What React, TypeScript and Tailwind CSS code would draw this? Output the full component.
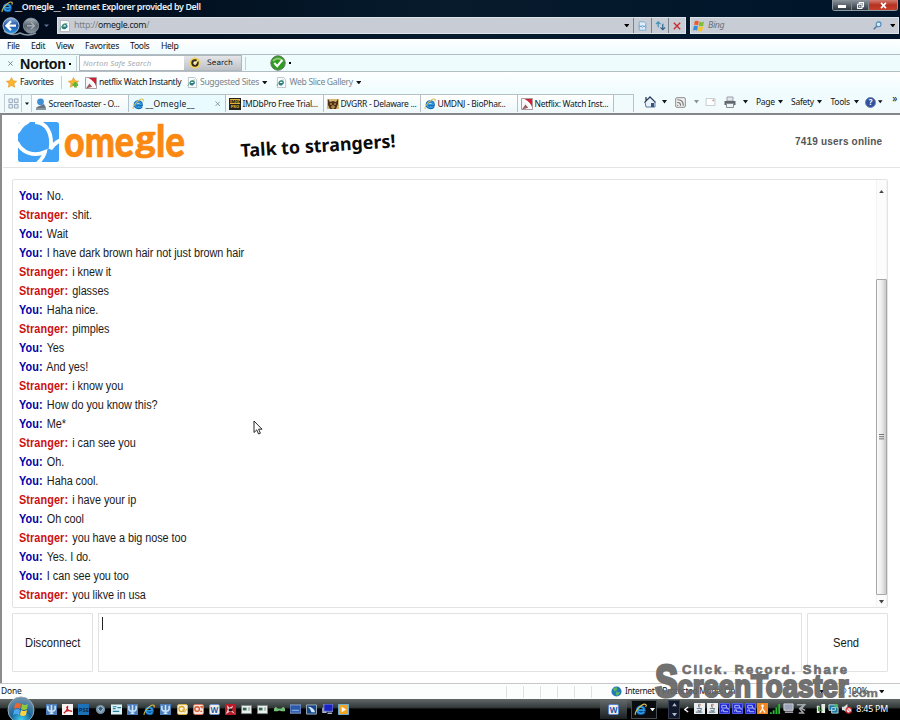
import type { ReactNode } from 'react';
import clsx from 'clsx';

interface IconProps {
  className?: string;
}

const messages: { from: 'You' | 'Stranger'; text: string }[] = [
  { from: 'You', text: 'No.' },
  { from: 'Stranger', text: 'shit.' },
  { from: 'You', text: 'Wait' },
  { from: 'You', text: 'I have dark brown hair not just brown hair' },
  { from: 'Stranger', text: 'i knew it' },
  { from: 'Stranger', text: 'glasses' },
  { from: 'You', text: 'Haha nice.' },
  { from: 'Stranger', text: 'pimples' },
  { from: 'You', text: 'Yes' },
  { from: 'You', text: 'And yes!' },
  { from: 'Stranger', text: 'i know you' },
  { from: 'You', text: 'How do you know this?' },
  { from: 'You', text: 'Me*' },
  { from: 'Stranger', text: 'i can see you' },
  { from: 'You', text: 'Oh.' },
  { from: 'You', text: 'Haha cool.' },
  { from: 'Stranger', text: 'i have your ip' },
  { from: 'You', text: 'Oh cool' },
  { from: 'Stranger', text: 'you have a big nose too' },
  { from: 'You', text: 'Yes. I do.' },
  { from: 'You', text: 'I can see you too' },
  { from: 'Stranger', text: 'you likve in usa' },
];

function IeIcon({ className }: IconProps) {
  return (
    <svg viewBox="0 0 12 12" className={clsx('shrink-0', className)}>
      <path d="M9.6 8.3C8.4 10.6 2.9 10.7 2.9 6.6 2.9 2.4 9.7 2.1 9.6 6.9H3.4" fill="none" stroke="#0f5fae" strokeWidth="2.5" />
      <path d="M9.3 8.3C8.2 10 3.1 10.2 3.1 6.5 3.1 2.8 9.3 2.6 9.3 6.6H3.6" fill="none" stroke="#2f9ce2" strokeWidth="1.4" />
      <path d="M1.4 10.9C-.3 8.9 7.6-.3 10.8 1.3c.7.5.4 1.6 0 2.3" fill="none" stroke="#d9bf4e" strokeWidth="1.1" />
    </svg>
  );
}

function IePage({ className }: IconProps) {
  return (
    <svg viewBox="0 0 12 12" className={clsx('shrink-0', className)}>
      <path d="M1.5.5h6.8l2.2 2.2v8.8h-9z" fill="#fbfdff" stroke="#a6b1b8" strokeWidth="0.8" />
      <path d="M8 7.2H3.5C3.6 8.8 6 8.9 6.8 7.9M3.5 6.9C3.3 3.6 8.1 3.2 8 7.2" fill="none" stroke="#2c7d86" strokeWidth="1.5" />
      <path d="M1.2 9.8C.6 8 5.7 3 8.4 3.3" fill="none" stroke="#61a36d" strokeWidth="0.9" />
    </svg>
  );
}

function Flag({ className }: IconProps) {
  return (
    <svg viewBox="0 0 12 12" className={clsx('shrink-0', className)}>
      <path d="M1.8 1.2C3.3.5 4.6.6 5.8 1.3L5 5.4C3.7 4.7 2.4 4.7 1 5.3Z" fill="#ee5b29" />
      <path d="M6.5 1.6c1.5.7 2.9.7 4.5 0l-.8 4.1c-1.5.7-3 .7-4.5 0z" fill="#83bd35" />
      <path d="M.9 6.1c1.3-.6 2.7-.6 4 .1l-.8 4.2c-1.3-.7-2.6-.7-4 0z" fill="#348cdc" />
      <path d="M5.6 6.5c1.5.7 2.9.7 4.5 0l-.8 4.2c-1.6.7-3 .7-4.5-.1z" fill="#fcc42b" />
    </svg>
  );
}

function NetflixIcon({ className }: IconProps) {
  return (
    <svg viewBox="0 0 12 12" className={clsx('shrink-0', className)}>
      <path d="M.5.5h11v11H.5z" fill="#fff" stroke="#9a8387" strokeWidth="0.8" />
      <path d="M3.5 1H11v8.2Q9.6 4.2 3.5 1z" fill="#cf2138" />
      <path d="M1 2q6.5 3 8 9H1z" fill="#f6f6f6" />
      <path d="M1 11.5l3.4-5 2.8 3.3z" fill="#9c5960" />
    </svg>
  );
}

function Star({ plus }: { plus?: boolean }) {
  return (
    <svg viewBox="0 0 12 12" className="size-[11px] shrink-0">
      <path d="M6 .5l1.7 3.6 3.9.5-2.9 2.7.8 3.9L6 9.3l-3.5 1.9.8-3.9L.4 4.6l3.9-.5z" fill="#fbb62d" stroke="#e18e1e" strokeWidth="0.6" />
      {plus && <path d="M8 5.5v6M5 8.5h6" stroke="#5eb63b" strokeWidth="2.6" />}
    </svg>
  );
}

function Caret({ className }: IconProps) {
  return (
    <svg viewBox="0 0 6 4" className={clsx('h-[3.5px] shrink-0', className ?? 'w-[5.5px]')}>
      <path d="M0 0h6L3 4z" fill="currentColor" />
    </svg>
  );
}

function TitleBar() {
  return (
    <div className="flex h-[14px] items-start justify-between">
      <div className="flex h-[14px] items-center pl-[1px]">
        <IeIcon className="size-[12px]" />
        <span className="ml-[2px] text-[8.9px] font-semibold tracking-[-0.37px] text-[#e8f0f4]">__Omegle__ - Internet Explorer provided by Dell</span>
      </div>
      <div className="mr-[2px] flex h-[11px] w-[66px] overflow-hidden rounded-b-[3px] border border-t-0 border-[#8f9aa3]">
        <div className="flex w-[19px] items-center justify-center border-r border-[#7f8991] bg-linear-to-b from-[#8d949c] to-[#2e3841]">
          <span className="mt-[3px] h-[3px] w-[8px] bg-white" />
        </div>
        <div className="flex w-[17px] items-center justify-center border-r border-[#7f8991] bg-linear-to-b from-[#8d949c] to-[#2e3841]">
          <svg viewBox="0 0 8 8" className="size-[7px]">
            <path d="M2.5 2V.7h5v4.6H6M.7 2.5h5v4.8h-5zM2.5 5h1.4" fill="none" stroke="#fff" strokeWidth="1.2" />
          </svg>
        </div>
        <div className="flex flex-1 items-center justify-center bg-linear-to-b from-[#d17a6d] via-[#b6301f] to-[#c5422e]">
          <svg viewBox="0 0 8 8" className="size-[7px]">
            <path d="M1.2 1l5.6 6M6.8 1L1.2 7" stroke="#fff" strokeWidth="1.8" />
          </svg>
        </div>
      </div>
    </div>
  );
}

function NavButtons() {
  return (
    <svg viewBox="0 0 54 20" className="h-[20px] w-[54px] shrink-0">
      <defs>
        <linearGradient id="back" x1="0" y1="0" x2="0" y2="1">
          <stop offset="0" stopColor="#8bb4e2" />
          <stop offset="0.5" stopColor="#1e519f" />
          <stop offset="1" stopColor="#2f9de9" />
        </linearGradient>
        <linearGradient id="fwd" x1="0" y1="0" x2="0" y2="1">
          <stop offset="0" stopColor="#b1bac3" />
          <stop offset="0.5" stopColor="#58636e" />
          <stop offset="1" stopColor="#8e99a3" />
        </linearGradient>
      </defs>
      <path d="M3 15q8 6 16 2 8 4 16 0" fill="none" stroke="#8494a2" strokeWidth="1.5" />
      <circle cx="10" cy="9.7" r="8" fill="url(#back)" stroke="#a9bfd4" />
      <circle cx="30" cy="9.7" r="7.6" fill="url(#fwd)" stroke="#7b8791" />
      <path d="M10 5.3L5.5 9.7l4.5 4.4M6 9.7h9" fill="none" stroke="#fff" strokeWidth="2.3" />
      <path d="M30 6.3l3.5 3.4-3.5 3.4M33 9.7h-7" fill="none" stroke="#a3adb6" strokeWidth="1.4" />
      <path d="M43 8.5h5L45.5 11z" fill="#5d7890" />
    </svg>
  );
}

function AddressBar() {
  return (
    <div className="flex h-[25px] items-start pl-[1px]">
      <div className="pt-[2px]">
        <NavButtons />
      </div>
      <div className="mt-[3px] ml-[2px] flex h-[17px] w-[629px] border border-[#dce4ea] bg-[#c8cdd5]">
        <div className="flex w-[575px] items-center pl-[1px]">
          <IePage className="size-[12px]" />
          <span className="ml-[3px] text-[8.8px] tracking-[-0.3px] text-[#757f87]">
            http://<span className="text-[#101820]">omegle.com</span>/
          </span>
          <Caret className="mr-[4px] ml-auto w-[5.5px] text-black" />
        </div>
        <div className="flex w-[18px] items-center justify-center border-l border-[#79838c]">
          <svg viewBox="0 0 10 12" className="h-[10px] w-[9px]">
            <path d="M1 1h6l2 2v8H1z" fill="#e0edf7" stroke="#6fa3cd" />
            <path d="M1 5l2 2 2-2 2 2 2-2M1 8l2-2 2 2 2-2 2 2" stroke="#5a9ccd" fill="none" />
          </svg>
        </div>
        <div className="flex w-[17px] items-center justify-center border-l border-[#79838c]">
          <svg viewBox="0 0 12 12" className="size-[11px]">
            <path d="M3.5 8V2M1 4.5L3.5 2 6 4.5" fill="none" stroke="#3c8fb4" strokeWidth="1.3" />
            <path d="M8.5 4V10.500M6 8l2.500 2.500L11 8" fill="none" stroke="#2f628f" strokeWidth="1.3" />
          </svg>
        </div>
        <div className="flex flex-1 items-center justify-center border-l border-[#79838c]">
          <svg viewBox="0 0 8 8" className="size-[8px]">
            <path d="M.8.8l6.4 6.4M7.2.8L.8 7.2" stroke="#c92e31" strokeWidth="1.4" />
          </svg>
        </div>
      </div>
      <div className="mt-[3px] ml-[4px] flex h-[17px] w-[209px] items-center border border-[#dce4ea] bg-[#c8cdd5] pl-[2px]">
        <Flag className="size-[12px]" />
        <span className="ml-[3px] text-[8.8px] tracking-[-0.4px] text-[#69727b] italic">Bing</span>
        <svg viewBox="0 0 10 10" className="ml-auto size-[9px]">
          <circle cx="6.2" cy="3.7" r="2.7" fill="#d6e9f8" stroke="#4a87b8" strokeWidth="1.2" />
          <path d="M4.2 5.8L.8 9.3" stroke="#4a78a5" strokeWidth="1.6" />
        </svg>
        <Caret className="mr-[3px] ml-[8px] w-[5.5px] text-black" />
      </div>
    </div>
  );
}

function MenuBar() {
  return (
    <div className="flex h-[15px] items-center bg-linear-to-b from-white to-[#effbfd] pl-[7px] text-[8.6px] tracking-[-0.3px] text-[#0c1013]">
      <span className="w-[24px]">File</span>
      <span className="w-[25px]">Edit</span>
      <span className="w-[29px]">View</span>
      <span className="w-[45px]">Favorites</span>
      <span className="w-[31px]">Tools</span>
      <span>Help</span>
    </div>
  );
}

function NortonBar() {
  return (
    <div className="flex h-[18px] items-center border-y border-[#b3bdc4] bg-[#effcfe] pl-[8px]">
      <svg viewBox="0 0 6 6" className="size-[5px]">
        <path d="M.5.5l5 5M5.500.5l-5 5" stroke="#687077" strokeWidth="1" />
      </svg>
      <span className="mt-[2px] ml-[7px] w-[48px] font-['Liberation_Sans',sans-serif] text-[14.2px] leading-none font-bold tracking-[-0.1px] text-[#111]">Norton</span>
      <span className="mt-[1px] ml-[1px] size-[2px] bg-black" />
      <span className="ml-[5px] h-[15px] w-px bg-[#c4ced3]" />
      <div className="ml-[2px] flex h-[16px] w-[163px] border border-[#aeb7bc]">
        <div className="w-[104px] bg-white pl-[3px] text-[7.8px] leading-[14px] tracking-[0.1px] text-[#a5abae] italic">Norton Safe Search</div>
        <div className="flex flex-1 items-center bg-linear-to-b from-[#e5e6e8] to-[#bec1c7] pl-[5px]">
          <svg viewBox="0 0 12 12" className="size-[12px]">
            <circle cx="6" cy="6" r="5.6" fill="#efd35f" />
            <circle cx="6" cy="6" r="2.7" fill="#fff" stroke="#332a18" strokeWidth="2" />
            <path d="M5 6l1 1 3-4" fill="none" stroke="#fce38a" strokeWidth="1.3" />
          </svg>
          <span className="ml-[6px] font-['DejaVu_Sans',sans-serif] text-[7.5px] text-[#161616]">Search</span>
        </div>
      </div>
      <span className="ml-[3px] h-[13px] w-px bg-[#c4ced3]" />
      <svg viewBox="0 0 16 16" className="ml-[24px] size-[16px]">
        <circle cx="8" cy="8" r="7.2" fill="#319b25" stroke="#5d735a" strokeWidth="1" />
        <path d="M3 6q5-5 10 0" stroke="#89cc6e" strokeWidth="2" fill="none" />
        <path d="M4.3 8l2.9 3.2L12.3 5" fill="none" stroke="#fff" strokeWidth="2" />
      </svg>
      <span className="ml-[3px] size-[2px] bg-black" />
    </div>
  );
}

function FavoritesBar() {
  return (
    <div className="flex h-[21px] items-center bg-linear-to-b from-white to-[#effcfe] pl-[6px] text-[8.6px] tracking-[-0.34px] text-[#10151a]">
      <Star />
      <span className="ml-[3px] w-[41px]">Favorites</span>
      <span className="mr-[6px] h-[13px] w-px bg-[#c4ced3]" />
      <Star plus />
      <NetflixIcon className="ml-[6px] size-[12px]" />
      <span className="ml-[2px] w-[88px] whitespace-nowrap">netflix Watch Instantly</span>
      <IePage className="size-[11px]" />
      <span className="ml-[2px] w-[62px] tracking-[-0.34px] whitespace-nowrap text-[#78848b]">Suggested Sites</span>
      <Caret />
      <IePage className="ml-[8px] size-[11px]" />
      <span className="ml-[3px] w-[66px] tracking-[-0.32px] whitespace-nowrap text-[#78848b]">Web Slice Gallery</span>
      <Caret />
    </div>
  );
}

interface TabProps {
  icon: ReactNode;
  label: string;
  className: string;
  active?: boolean;
}

function Tab({ icon, label, className, active }: TabProps) {
  return (
    <div className={clsx('flex h-[18px] items-center border-t border-r border-[#b5c0c7] pt-px pl-[3px]', active ? 'bg-[#eafbff]' : 'bg-linear-to-b from-white to-[#edf8fa]', className)}>
      {icon}
      <span className={clsx('ml-[1.5px] whitespace-nowrap', active && 'tracking-[0.25px]')}>{label}</span>
      {active && (
        <svg viewBox="0 0 6 6" className="mr-[5px] ml-auto size-[5.5px]">
          <path d="M.5.5l5 5M5.5.5l-5 5" stroke="#87929a" />
        </svg>
      )}
    </div>
  );
}

function TabBar() {
  return (
    <div className="flex h-[22px] items-start border-b-2 border-[#85858b] bg-linear-to-b from-[#effcfe] to-[#f3fafb] pt-[1px] text-[8.5px] tracking-[-0.28px] text-[#11171d]">
      <div className="ml-[4px] flex h-[18px] w-[18px] items-center justify-center border border-b-0 border-[#c2ccd2]">
        <svg viewBox="0 0 12 12" className="size-[11px]">
          <path d="M1 1h4v4H1zM7 1h4v4H7zM1 7h4v4H1zM7 7h4v4H7z" fill="#e4ecf4" stroke="#96a6b8" />
        </svg>
      </div>
      <div className="flex h-[18px] w-[10px] items-center justify-center border border-b-0 border-l-0 border-[#c2ccd2]">
        <Caret className="w-[4px]" />
      </div>
      <Tab
        className="w-[97px]"
        icon={
          <svg viewBox="0 0 12 12" className="size-[12px]">
            <circle cx="5.5" cy="3.8" r="3.4" fill="#3f91d6" />
            <path d="M2 9l7-3 2 4H1z" fill="#68747f" />
            <path d="M1 11h10" stroke="#26333f" />
          </svg>
        }
        label="ScreenToaster - O..."
      />
      <Tab className="w-[97px]" icon={<IeIcon className="size-[12px]" />} label="__Omegle__" active />
      <Tab
        className="w-[98px]"
        icon={
          <div className="flex h-[12px] w-[12px] flex-col items-center bg-[#25221e] pt-px">
            <span className="h-[5px] w-[10px] bg-[#dab53b] text-center text-[4px] leading-[5px] font-bold tracking-normal text-black">IMDb</span>
            <span className="mt-[1px] text-[4px] leading-[4px] font-bold tracking-normal text-[#e4b930]">PRO</span>
          </div>
        }
        label="IMDbPro Free Trial..."
      />
      <Tab
        className="w-[97px]"
        icon={
          <svg viewBox="0 0 12 12" className="size-[12px]">
            <path d="M0 1h12v10H0z" fill="#d9b873" />
            <path d="M1 1l2 3 3-1 3 1 2-3v5L9 11H3L1 7z" fill="#4e3319" />
            <path d="M3 6h2M7 6h2M5 8h2v2H5z" stroke="#e1b767" />
          </svg>
        }
        label="DVGRR - Delaware ..."
      />
      <Tab className="w-[97px]" icon={<IeIcon className="size-[12px]" />} label="UMDNJ - BioPhar..." />
      <Tab className="w-[96px]" icon={<NetflixIcon className="size-[12px]" />} label="Netflix: Watch Inst..." />
      <div className="h-[18px] w-[20px] border-t border-r border-[#b5c0c7]" />
      <div className="flex h-[16px] flex-1 items-center pl-[10px]">
        <svg viewBox="0 0 12 12" className="size-[12px] shrink-0">
          <path d="M1 6l5-5 5 5v5H2z" fill="#eaf1f9" stroke="#5d7797" />
          <path d="M.5 6.4L6 1l5.5 5.4M2 1v4" fill="none" stroke="#2c405d" strokeWidth="1.3" />
          <path d="M7 7h3v4H7z" fill="#31548b" />
        </svg>
        <Caret className="ml-[6px] w-[5px]" />
        <svg viewBox="0 0 12 12" className="ml-[8px] size-[11px] shrink-0">
          <rect x=".7" y=".7" width="10.6" height="10.6" rx="1.5" fill="#eee" stroke="#868686" />
          <path d="M3 9.2h0M3 6q3 0 3 3M3 3q6 0 6 6" fill="none" stroke="#747474" strokeWidth="1.3" strokeLinecap="round" />
        </svg>
        <Caret className="ml-[8px] w-[5px] text-[#8d9498]" />
        <svg viewBox="0 0 12 10" className="ml-[6px] h-[8px] w-[11px] shrink-0">
          <path d="M.5.5h11v9H.5z" fill="#fff" stroke="#b8bec2" />
          <path d="M8.5 2h2v2h-2z" fill="#e18385" />
        </svg>
        <svg viewBox="0 0 12 12" className="ml-[8px] size-[12px] shrink-0">
          <path d="M3 1h6v4H3z" fill="#e4e7ed" stroke="#999ea6" />
          <path d="M.5 5h11v4H.5z" fill="#62666e" />
          <path d="M2.5 7.5h7v4h-7z" fill="#edf4fa" stroke="#858d95" />
        </svg>
        <Caret className="ml-[7px] w-[5px]" />
        <span className="ml-[8px] w-[21.5px]">Page</span>
        <Caret className="w-[5px]" />
        <span className="ml-[8.5px] w-[25.5px]">Safety</span>
        <Caret className="w-[5px]" />
        <span className="ml-[9px] w-[23px]">Tools</span>
        <Caret className="w-[5px]" />
        <span className="ml-[6.5px] flex size-[11px] shrink-0 items-center justify-center rounded-full border border-[#6d83ae] bg-[#3050a0] text-[8px] leading-none font-bold text-white">?</span>
        <Caret className="ml-[2px] w-[4.5px]" />
        <span className="mb-[9px] ml-auto pr-[3px] text-[10px] leading-none">»</span>
      </div>
    </div>
  );
}

function OmegleHeader() {
  return (
    <header className="h-[53px] border-b border-[#e5e5e5]">
      <svg viewBox="0 0 897 52" className="h-[52px] w-[897px]">
        <clipPath id="badge">
          <rect x="15" y="7" width="41" height="40" rx="2.5" />
        </clipPath>
        <g clipPath="url(#badge)">
          <path d="M15 7h41v40H15z" fill="#3fa2f6" />
          <path d="M14 6h14L14 20z" fill="#fff" />
          <circle cx="30.5" cy="22" r="14" fill="#3fa2f6" />
          <path d="M14 27C19 38 31 42 42 37Q41 42 34 49" fill="none" stroke="#fff" strokeWidth="3.8" />
          <path d="M32 7C43 7 50 18 47.5 34Q51 28 58 25" fill="none" stroke="#fff" strokeWidth="3.8" />
        </g>
        <text className="fill-[#fb8810] stroke-[#fb8810] stroke-[0.7] font-['Lato',sans-serif] text-[44px] font-black">
          <tspan x="61" y="42" textLength="70" lengthAdjust="spacingAndGlyphs">ome</tspan>
          <tspan x="132.5" y="34.5" textLength="20" lengthAdjust="spacingAndGlyphs" className="font-['Open_Sans',sans-serif] text-[33px] font-bold">g</tspan>
          <tspan x="153" y="42" textLength="29" lengthAdjust="spacingAndGlyphs">le</tspan>
        </text>
        <text x="238" y="42" textLength="155" lengthAdjust="spacingAndGlyphs" transform="rotate(-3.6 238 42)" className="fill-[#0b0b0b] font-['Noto_Sans','Open_Sans',sans-serif] text-[18px] font-bold">Talk to strangers!</text>
        <text x="792" y="30" textLength="87" lengthAdjust="spacing" className="fill-[#555] font-['Liberation_Sans',sans-serif] text-[10px] font-bold">7419 users online</text>
      </svg>
    </header>
  );
}

function ScrollBar() {
  return (
    <div className="flex w-[11px] flex-col items-center border-x border-[#f3f3f3] bg-[#fcfcfc]">
      <svg viewBox="0 0 6 4" className="mt-[10px] h-[3px] w-[5px]">
        <path d="M0 4h6L3 0z" fill="#444" />
      </svg>
      <div className="mt-[86px] flex h-[316px] w-[11px] items-center justify-center rounded-[1px] border border-[#a7a7a7] bg-linear-to-r from-[#fafafa] via-[#eeeeee] to-[#c9c9c9]">
        <svg viewBox="0 0 6 6" className="size-[6px]">
          <path d="M0 .5h5M0 2.7h5M0 4.9h5" stroke="#747474" strokeWidth="1" />
        </svg>
      </div>
      <Caret className="mt-[5px] w-[5px] text-[#444]" />
    </div>
  );
}

function ChatLog() {
  return (
    <div className="mt-[11px] ml-[9px] flex h-[429px] w-[876px] rounded-[2px] border border-[#e3e3e3]">
      <div className="flex-1 pt-[7px] pl-[6px]">
        {messages.map((message, index) => (
          <p key={index} className="h-[19px] origin-left scale-x-[0.905] text-[12px] leading-[19.5px] tracking-[-0.05px] text-[#1b1b1b]">
            <span className={clsx('mr-[1.3px] font-bold tracking-[0.1px]', message.from === 'You' ? 'text-[#0000a8]' : 'text-[#cb1111]')}>{message.from}:</span> {message.text}
          </p>
        ))}
      </div>
      <ScrollBar />
    </div>
  );
}

function ChatControls() {
  return (
    <div className="mt-[5px] ml-[9px] flex h-[59px] text-[12px] text-[#181818]">
      <button className="w-[81px] rounded-[1px] border border-[#e2e2e2]">
        <span className="inline-block scale-x-[0.93]">Disconnect</span>
      </button>
      <div className="ml-[5px] w-[704px] border border-[#e2e2e2] pt-[3px] pl-[3px]">
        <div className="h-[13px] w-px bg-[#222]" />
      </div>
      <button className="ml-[5px] w-[81px] rounded-[1px] border border-[#e2e2e2] pr-[2px]">
        <span className="inline-block scale-x-[0.93]">Send</span>
      </button>
    </div>
  );
}

function StatusBar() {
  return (
    <div className="flex h-[16px] items-center border-t border-[#c7c7c7] bg-[#fcfdfd] text-[8.4px] text-[#111]">
      <span className="w-[506px] pl-[1px] tracking-[-0.1px]">Done</span>
      {[0, 1, 2, 3, 4].map((cell) => (
        <span key={cell} className="h-[12px] w-[17px] border-l border-[#e1e1e1]" />
      ))}
      <span className="h-[12px] w-[20px] border-l border-[#e1e1e1]" />
      <svg viewBox="0 0 12 12" className="size-[11px] shrink-0">
        <circle cx="6" cy="6" r="5.5" fill="#2276bb" />
        <path d="M2 3l4-2 1 3-3 2zM6 6l4 1-3 4-2-2z" fill="#5ab957" />
      </svg>
      <span className="ml-[3px] w-[194px] tracking-[-0.34px] whitespace-nowrap">Internet | Protected Mode: On</span>
      <Caret />
      <svg viewBox="0 0 10 10" className="ml-[13px] size-[9px] shrink-0">
        <circle cx="6" cy="4" r="3" fill="#dceafc" stroke="#4e82bb" />
        <path d="M4 6L1 9" stroke="#4e82bb" strokeWidth="1.5" />
      </svg>
      <span className="ml-[1px] w-[31px] tracking-[-0.2px]">100%</span>
      <Caret />
    </div>
  );
}

function TrayGlyph({ className, children }: { className?: string; children: ReactNode }) {
  return (
    <svg viewBox="0 0 12 12" className={clsx('size-[11px] shrink-0', className)}>
      {children}
    </svg>
  );
}

function PsiTile() {
  return (
    <TrayGlyph>
      <path d="M0 0h12v12H0z" fill="#4d7db8" />
      <path d="M2 2v3q0 3 4 3t4-3V2M6 1v10M4 10h4" fill="none" stroke="#c9e3f8" strokeWidth="1.7" />
    </TrayGlyph>
  );
}

function CardTile() {
  return (
    <TrayGlyph>
      <path d="M.5 1.5h11v9H.5z" fill="#eaf0ee" stroke="#77827e" />
      <path d="M2 4h4v3H2z" fill="#30684b" />
      <path d="M7.5 4.5H10M7.5 6.5H10" stroke="#83908b" />
    </TrayGlyph>
  );
}

function OfficeTile({ letter, className }: { letter: string; className: string }) {
  return <span className={clsx('flex size-[11px] shrink-0 items-center justify-center rounded-[2px] border bg-[#f3eee6] text-[8px] leading-none font-bold', className)}>{letter}</span>;
}

function QuickLaunch() {
  return (
    <div className="ml-[11px] flex h-[13px] items-center gap-[5.2px]">
      <PsiTile />
      <TrayGlyph>
        <path d="M0 0h12v12H0z" fill="#f8f3f2" />
        <path d="M2 10Q7 6 6 2M5 3q1 5 6 5Q5 6 2 10" fill="none" stroke="#bf1820" strokeWidth="1.3" />
      </TrayGlyph>
      <span className="flex size-[11px] shrink-0 items-center justify-center bg-[#1d71b8] text-[6px] leading-none font-bold text-[#092d50]">PSE</span>
      <TrayGlyph>
        <circle cx="6" cy="6" r="5" fill="#7592a7" />
        <path d="M3 5l3-3 3 3-3 4z" fill="#365c7b" stroke="#b9d0df" />
      </TrayGlyph>
      <TrayGlyph>
        <path d="M0 .5h12v11H0z" fill="#d7f1f6" />
        <path d="M2 3h4M2 5h3M2 8h7M7 4h4" stroke="#2c809e" strokeWidth="1.3" />
      </TrayGlyph>
      <PsiTile />
      <IeIcon className="size-[12px]" />
      <PsiTile />
      <TrayGlyph>
        <rect x=".5" y=".5" width="11" height="11" rx="2" fill="#fbf3d8" stroke="#e3b449" />
        <circle cx="5" cy="5.5" r="2.8" fill="none" stroke="#d9a52c" strokeWidth="1.5" />
        <path d="M6 6l2 3 3-4" fill="none" stroke="#d9a52c" />
      </TrayGlyph>
      <TrayGlyph>
        <rect x=".5" y=".5" width="11" height="11" rx="2" fill="#fbe4da" stroke="#dd7453" />
        <circle cx="4.5" cy="5.5" r="2.5" fill="none" stroke="#d65a34" strokeWidth="1.5" />
        <path d="M8 3h2v2M8 8h2" fill="none" stroke="#d65a34" strokeWidth="1.4" />
      </TrayGlyph>
      <OfficeTile letter="W" className="border-[#6790ce] text-[#2b5eaf]" />
      <TrayGlyph>
        <path d="M0 0h12v12H0z" fill="#bb1928" />
        <path d="M2 1l3 3 4-2-2 4 4 5-5-3-5 3 2-5z" fill="#f4d7d5" />
        <path d="M4 5h4v3H4z" fill="#1d1515" />
      </TrayGlyph>
      <CardTile />
      <CardTile />
      <TrayGlyph>
        <path d="M0 8V5l2-2 2 2h4l2-2 2 2v3H8L6 7 4 8z" fill="#74bd77" />
      </TrayGlyph>
      <TrayGlyph>
        <path d="M0 1h12v9H0z" fill="#2b58aa" stroke="#91a9d3" />
        <path d="M2 7h8" stroke="#7da4df" strokeWidth="1.5" />
      </TrayGlyph>
      <TrayGlyph>
        <path d="M.5 1h11v10H.5z" fill="#15478a" stroke="#a4b1be" />
        <path d="M2 3q6 0 8 6H6Q5 5 2 3z" fill="#d5e7f4" />
      </TrayGlyph>
      <TrayGlyph>
        <path d="M2 0h10v8H2z" fill="#1b21c3" stroke="#8c9cd0" />
        <path d="M1 4v5h4M6 10h5" stroke="#a9b5d9" strokeWidth="1.6" fill="none" />
      </TrayGlyph>
      <TrayGlyph>
        <path d="M.5.5h11v11H.5z" fill="#f3a321" stroke="#67b8e8" />
        <path d="M4 3l5 3-5 3z" fill="#fff" />
      </TrayGlyph>
    </div>
  );
}

function JavaTile() {
  return (
    <TrayGlyph>
      <path d="M0 0h12v12H0z" fill="#e9edf0" />
      <path d="M6 1q-2 2 0 4M3 6h5q0 4-4 2M2 10h7" stroke="#6f8190" fill="none" strokeWidth="1.2" />
      <path d="M7 1l-1 3" stroke="#dc823f" />
    </TrayGlyph>
  );
}

function BlueTile() {
  return (
    <TrayGlyph>
      <path d="M.5.5h11v11H.5z" fill="#2027d2" stroke="#5d65f4" />
      <path d="M3 2.5h5v3H3zM3 9.5V7.5h2v2h5M8 5.5h2v2" stroke="#bac5ff" fill="none" />
    </TrayGlyph>
  );
}

function Taskbar() {
  return (
    <div className="flex h-[21px] items-center bg-linear-to-b from-[#626866] from-0% via-[#333a3a] via-40% to-black to-52%">
      <svg viewBox="0 0 28 21" className="ml-[7px] h-[21px] w-[28px] overflow-visible">
        <defs>
          <radialGradient id="orb" cx="0.5" cy="0.9" r="0.8">
            <stop offset="0" stopColor="#42d6f2" />
            <stop offset="0.5" stopColor="#17669c" />
            <stop offset="1" stopColor="#6a8da8" />
          </radialGradient>
        </defs>
        <circle cx="14" cy="11" r="13" fill="url(#orb)" stroke="#93a9b2" />
        <path d="M8 5q3-2 6 0l-1 5q-3-2-6 0z" fill="#ef642c" />
        <path d="M15 5q3 2 6 0l-1 5q-3 2-6 0z" fill="#91c83b" />
        <path d="M7 11q3-2 6 0l-1 5q-3-2-6 0z" fill="#4ca5ef" />
        <path d="M14 11q3 2 6 0l-1 5q-3 2-6 0z" fill="#ffd13b" />
      </svg>
      <QuickLaunch />
      <div className="ml-auto flex h-full w-[300px] items-center">
        <div className="flex h-[19px] w-[27px] items-center justify-center bg-linear-to-b from-[#63696b] to-[#1b2023]">
          <OfficeTile letter="W" className="border-[#5b85cb] text-[#2355aa]" />
        </div>
        <div className="ml-[4px] flex h-[19px] w-[26px] items-center justify-center gap-[3px] border border-[#454b4e] bg-[#090b0d] text-white">
          <IeIcon className="size-[13px]" />
          <Caret className="w-[5px]" />
        </div>
        <div className="ml-[11px] flex h-[19px] w-[12px] flex-col items-center justify-between border border-[#343b4e] bg-[#10182c] py-[2px] text-[#aeb7c5]">
          <Caret className="w-[5px] rotate-180" />
          <Caret className="w-[5px]" />
        </div>
        <svg viewBox="0 0 6 8" className="mr-[5px] ml-[4px] h-[7px] w-[5px]">
          <path d="M5 1L1 4l4 3" fill="none" stroke="#fff" strokeWidth="1.5" />
        </svg>
        <div className="mb-[2px] flex items-center gap-[1.7px]">
          <JavaTile />
          <JavaTile />
          <BlueTile />
          <BlueTile />
          <BlueTile />
          <TrayGlyph>
            <path d="M0 0h12v12H0z" fill="#ef8727" />
            <circle cx="6" cy="3" r="1.5" fill="#fff" />
            <path d="M6 4v3M3 10.5l3-4 3 4" fill="none" stroke="#fff" strokeWidth="1.4" />
          </TrayGlyph>
          <TrayGlyph>
            <path d="M1 12v-2M4 12V8M7 12V5M10 12V1" stroke="#27b832" strokeWidth="2" />
          </TrayGlyph>
          <TrayGlyph>
            <path d="M1 1h10v7H1z" fill="#9ca3b8" stroke="#d5d8e1" />
            <path d="M2 10h9" stroke="#b9bdca" strokeWidth="1.5" />
          </TrayGlyph>
          <TrayGlyph>
            <path d="M1 2h8L4 6l4 5H3M10 1L6 6l4 2" fill="none" stroke="#a2a8ab" strokeWidth="1.7" />
          </TrayGlyph>
          <TrayGlyph className="ml-[7px]">
            <path d="M2 3h3v8H2zM7 1h4v10H7z" fill="#e3eee2" />
            <path d="M4 4v4h4" stroke="#459a43" strokeWidth="1.5" fill="none" />
          </TrayGlyph>
          <TrayGlyph>
            <path d="M1 2h7v6H1zM4 5h7v6H4z" fill="#18769f" stroke="#c1e3ed" />
            <circle cx="9" cy="3" r="2.2" fill="#4fb56d" />
          </TrayGlyph>
          <TrayGlyph>
            <path d="M1 4h2l4-3v10L3 8H1z" fill="#d8dfe1" />
            <circle cx="8.5" cy="8" r="3" fill="#fff" stroke="#dc2730" strokeWidth="1.3" />
            <path d="M6.5 6l4 4" stroke="#dc2730" />
          </TrayGlyph>
        </div>
        <span className="mr-[12px] ml-auto text-[8.8px] tracking-[-0.2px] whitespace-nowrap text-white">8:45 PM</span>
      </div>
    </div>
  );
}

function Watermark() {
  return (
    <svg viewBox="0 0 230 40" className="absolute top-[660px] left-[652px] h-[40px] w-[230px] overflow-visible font-['Liberation_Sans',sans-serif] font-bold">
      <g className="fill-[#666] stroke-[#666]" opacity="0.92">
        <text x="3" y="36.5" textLength="23" lengthAdjust="spacingAndGlyphs" className="stroke-[3] text-[47px]">S</text>
        <text x="25.5" y="36.5" textLength="171" lengthAdjust="spacingAndGlyphs" className="stroke-[2.2] text-[31px]">creenToaster</text>
        <text x="30" y="14" textLength="165" lengthAdjust="spacing" className="stroke-[0.7] text-[13px]">Click. Record. Share</text>
        <text x="196" y="37" textLength="30" lengthAdjust="spacingAndGlyphs" className="stroke-[0.3] text-[11px]">.com</text>
      </g>
    </svg>
  );
}

export default function App() {
  return (
    <div className="relative flex h-[720px] w-[900px] flex-col overflow-hidden bg-white font-['Noto_Sans','Open_Sans',sans-serif]">
      <div className="bg-linear-to-r from-[#000a1b] via-[#071b2c] to-[#00142a]">
        <TitleBar />
        <AddressBar />
      </div>
      <MenuBar />
      <NortonBar />
      <FavoritesBar />
      <TabBar />
      <main className="h-[568px] border-l-2 border-[#8c8c8c] pl-px font-['Liberation_Sans',Arial,sans-serif]">
        <OmegleHeader />
        <ChatLog />
        <ChatControls />
      </main>
      <StatusBar />
      <Taskbar />
      <Watermark />
      <svg viewBox="0 0 10 15" className="absolute top-[420px] left-[253px] h-[15px] w-[10px]">
        <path d="M1 1v11.5l2.7-2.6L5.6 14l1.8-.8-1.8-4H9z" fill="#fff" stroke="#111" strokeWidth="0.9" />
      </svg>
    </div>
  );
}
